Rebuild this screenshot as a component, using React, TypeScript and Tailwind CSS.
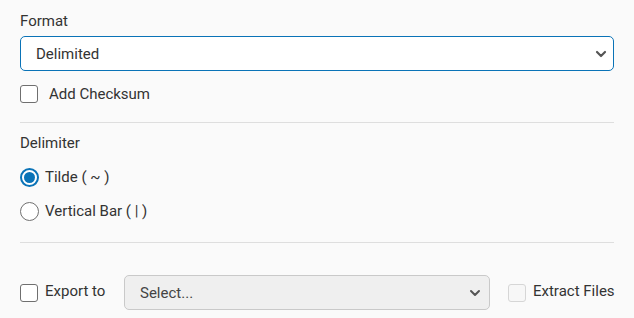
import { ChevronDown } from "lucide-react";

function Checkbox({ disabled }: { disabled?: boolean }) {
  return (
    <span
      className={
        disabled
          ? "block w-[18px] h-[18px] shrink-0 rounded-[3px] border border-[#d6d6d6] bg-[#f7f7f7]"
          : "block w-[18px] h-[18px] shrink-0 rounded-[3px] border-[1.5px] border-[#6f6f6f] bg-white"
      }
    />
  );
}

function Radio({ checked }: { checked?: boolean }) {
  return checked ? (
    <span className="flex items-center justify-center w-[19px] h-[19px] rounded-full border-2 border-[#0a73b7] bg-white">
      <span className="block w-[11px] h-[11px] rounded-full bg-[#0a73b7]" />
    </span>
  ) : (
    <span className="block w-[19px] h-[19px] rounded-full border-[1.5px] border-[#707070] bg-white" />
  );
}

export default function App() {
  return (
    <div className="min-h-screen bg-[#fafafa] px-5 pt-[11px] font-['Roboto',sans-serif] text-[15px] leading-5 text-[#333]">
      <label className="block">Format</label>
      <div className="mt-[5px] flex h-[35px] items-center justify-between rounded-[5px] border-[1.5px] border-[#0a73b7] bg-white pl-[15px] pr-[4px]">
        <span>Delimited</span>
        <ChevronDown className="h-[16px] w-[16px] text-[#555]" strokeWidth={3.2} />
      </div>
      <div className="mt-[14px] flex h-[18px] items-center gap-[11px]">
        <Checkbox />
        <span>Add Checksum</span>
      </div>
      <div className="mt-[19px] h-px bg-[#dedede]" />

      <div className="mt-[10px]">Delimiter</div>
      <div className="mt-[14px] flex items-center gap-[6px]">
        <Radio checked />
        <span>Tilde ( ~ )</span>
      </div>
      <div className="mt-[14px] flex items-center gap-[6px]">
        <Radio />
        <span>Vertical Bar ( | )</span>
      </div>
      <div className="mt-[21px] h-px bg-[#dedede]" />

      <div className="mt-[32px] flex items-center whitespace-nowrap">
        <div className="flex w-[104px] shrink-0 items-center gap-[7px]">
          <Checkbox />
          <span className="-mt-[4px]">Export to</span>
        </div>
        <div className="flex h-[35px] w-[366px] shrink-0 items-center justify-between rounded-[5px] border border-[#c9c9c9] bg-[#efefef] pl-[15px] pr-[6px] text-[#444]">
          <span>Select...</span>
          <ChevronDown className="h-[16px] w-[16px] text-[#555]" strokeWidth={3} />
        </div>
        <div className="ml-[18px] flex shrink-0 items-center gap-[7px]">
          <Checkbox disabled />
          <span className="-mt-[4px]">Extract Files</span>
        </div>
      </div>
    </div>
  );
}
